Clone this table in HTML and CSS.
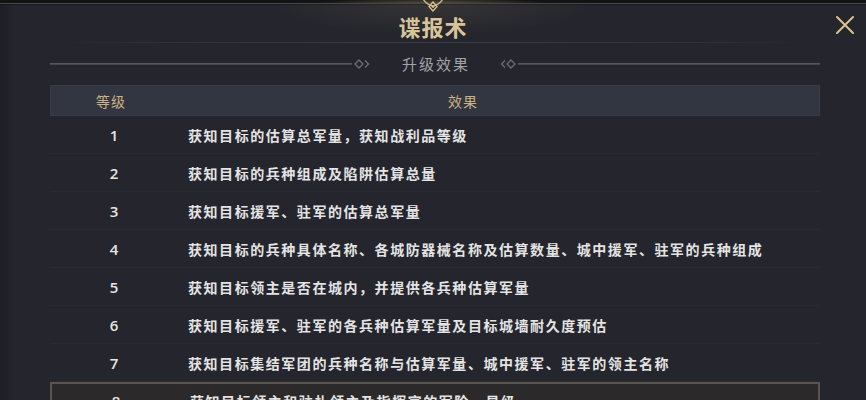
FILE: index.html
```html
<!DOCTYPE html>
<html lang="zh-CN">
<head>
<meta charset="utf-8">
<link rel="stylesheet" href="styles.css">
</head>
<body>
<div class="panel">
  <div class="topstrip"></div>
  <svg class="ornament" width="24" height="14" viewBox="0 0 24 14">
    <path d="M2 0 Q6 6 12 7 Q18 6 22 0" fill="none" stroke="#cdb585" stroke-width="1.4"/>
    <path d="M12 3 L16 7.5 L12 12 L8 7.5 Z" fill="none" stroke="#d6c193" stroke-width="1.4"/>
    <circle cx="12" cy="7.5" r="1.4" fill="#d6c193"/>
  </svg>
  <header class="head">
    <h1 class="title">谍报术</h1>
    <svg class="close" width="20" height="20" viewBox="0 0 20 20">
      <path d="M2 2 L18 18 M18 2 L2 18" stroke="#dcc38e" stroke-width="2" stroke-linecap="round"/>
    </svg>
  </header>
  <div class="rule"></div>
  <div class="section">
    <div class="line"></div>
    <svg class="deco" width="16" height="10" viewBox="0 0 16 10">
      <path d="M5 1 L9 5 L5 9 L1 5 Z" fill="none" stroke="#6b6d74" stroke-width="1.3"/>
      <path d="M11 1.5 L14.5 5 L11 8.5" fill="none" stroke="#6b6d74" stroke-width="1.3"/>
    </svg>
    <span class="section-title">升级效果</span>
    <svg class="deco" width="16" height="10" viewBox="0 0 16 10">
      <path d="M11 1 L15 5 L11 9 L7 5 Z" fill="none" stroke="#6b6d74" stroke-width="1.3"/>
      <path d="M5 1.5 L1.5 5 L5 8.5" fill="none" stroke="#6b6d74" stroke-width="1.3"/>
    </svg>
    <div class="line"></div>
  </div>
  <div class="table">
    <div class="thead">
      <div class="th th-lv">等级</div>
      <div class="th th-ef">效果</div>
    </div>
    <div class="row"><div class="lv">1</div><div class="ef">获知目标的估算总军量，获知战利品等级</div></div>
    <div class="row"><div class="lv">2</div><div class="ef">获知目标的兵种组成及陷阱估算总量</div></div>
    <div class="row"><div class="lv">3</div><div class="ef">获知目标援军、驻军的估算总军量</div></div>
    <div class="row"><div class="lv">4</div><div class="ef">获知目标的兵种具体名称、各城防器械名称及估算数量、城中援军、驻军的兵种组成</div></div>
    <div class="row"><div class="lv">5</div><div class="ef">获知目标领主是否在城内，并提供各兵种估算军量</div></div>
    <div class="row"><div class="lv">6</div><div class="ef">获知目标援军、驻军的各兵种估算军量及目标城墙耐久度预估</div></div>
    <div class="row"><div class="lv">7</div><div class="ef">获知目标集结军团的兵种名称与估算军量、城中援军、驻军的领主名称</div></div>
    <div class="row current"><div class="lv">8</div><div class="ef">获知目标领主和驻扎领主及指挥官的军阶、星级</div></div>
  </div>
</div>
</body>
</html>
```
FILE: styles.css
```css
* { box-sizing: border-box; }
html, body { margin: 0; padding: 0; }
body {
  width: 866px;
  height: 400px;
  overflow: hidden;
  background: #24252c;
  font-family: "Noto Sans CJK SC", "Noto Sans", sans-serif;
}
.panel {
  position: relative;
  width: 866px;
  height: 400px;
  background: linear-gradient(90deg, #1e1f25 0px, #25262d 14px, #25262d 100%);
}
.topstrip {
  height: 4px;
  background: #121314;
  border-bottom: 1px solid #4a4840;
  box-shadow: 0 1px 0 rgba(0,0,0,0.3);
  background-image: radial-gradient(ellipse 120px 6px at 433px 4px, rgba(230,210,160,0.35), transparent);
}
.ornament {
  position: absolute;
  left: 421px;
  top: -1px;
}
.head {
  position: relative;
  height: 38px;
  display: flex;
  justify-content: center;
  align-items: center;
  background: radial-gradient(ellipse 160px 30px at 433px 0px, rgba(200,180,130,0.10), transparent);
}
.title {
  margin: 0;
  padding-top: 5px;
  font-size: 22px;
  font-weight: 700;
  letter-spacing: 1px;
  color: #d8c49a;
  line-height: 30px;
}
.close {
  position: absolute;
  right: 11px;
  top: 11px;
}
.rule {
  height: 1px;
  margin: 0 60px;
  background: linear-gradient(90deg, transparent, #32343c 20%, #3a3c44 50%, #32343c 80%, transparent);
}
.section {
  height: 42px;
  margin: 0 46px 0 50px;
  display: flex;
  align-items: center;
  gap: 0;
}
.line {
  flex: 1;
  height: 2px;
  background: #45474e;
  border-top: 1px solid #55575e;
}
.deco { flex: none; margin: 0 2px; }
.section-title {
  padding: 0 28px 0 30px;
  font-size: 15px;
  letter-spacing: 2px;
  color: #a4a4a6;
  line-height: 20px;
}
.table {
  margin: 0 46px 0 50px;
}
.thead {
  height: 31px;
  display: grid;
  grid-template-columns: 128px 1fr;
  align-items: center;
  background: #313641;
  border: 1px solid #363b46;
}
.th {
  font-size: 14px;
  color: #cdb183;
  letter-spacing: 1px;
}
.th-lv { text-align: center; padding-right: 8px; }
.th-ef { text-align: center; padding-right: 72px; }
.row {
  height: 38px;
  display: grid;
  grid-template-columns: 128px 1fr;
  align-items: center;
  border-bottom: 1px solid #2a2b32;
}
.lv {
  text-align: center;
  font-family: "Open Sans", "Noto Sans", sans-serif;
  font-size: 15px;
  font-weight: 600;
  color: #e6e6e6;
}
.ef {
  padding-left: 10px;
  font-size: 14px;
  font-weight: 700;
  letter-spacing: 1.55px;
  color: #e4e4e4;
  white-space: nowrap;
}
.row.current {
  border: 2px solid #5b544b;
  background: #2b2929;
  padding-top: 0;
}
```
